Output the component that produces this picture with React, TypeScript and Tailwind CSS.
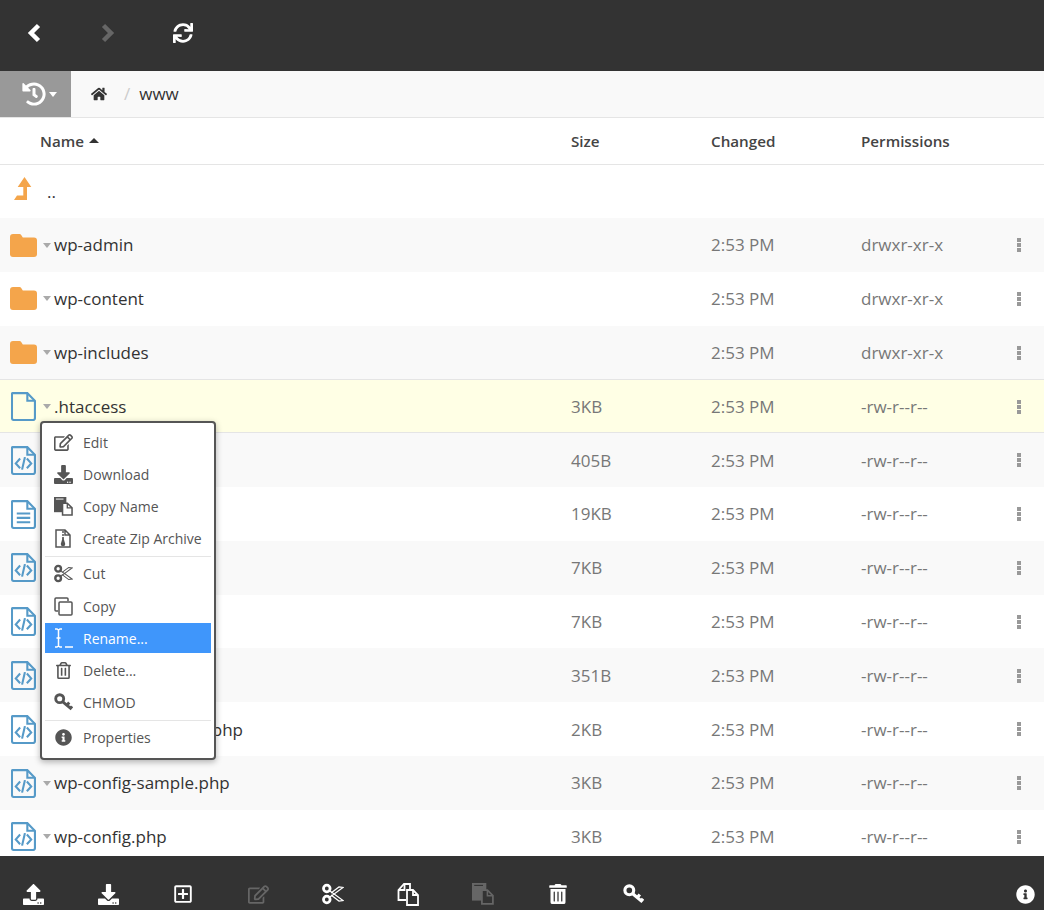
import {
  FaDownload,
  FaHistory,
  FaHome,
  FaInfoCircle,
  FaRegEdit,
  FaRegPlusSquare,
  FaRegTrashAlt,
  FaSync,
  FaTrashAlt,
  FaUpload,
} from "react-icons/fa";

type FileKind = "folder" | "file" | "code" | "text";

// names of rows fully covered by the open menu are left empty
const rows: { name: string; size: string; perms: string; kind: FileKind }[] = [
  { name: "wp-admin", size: "", perms: "drwxr-xr-x", kind: "folder" },
  { name: "wp-content", size: "", perms: "drwxr-xr-x", kind: "folder" },
  { name: "wp-includes", size: "", perms: "drwxr-xr-x", kind: "folder" },
  { name: ".htaccess", size: "3KB", perms: "-rw-r--r--", kind: "file" },
  { name: "", size: "405B", perms: "-rw-r--r--", kind: "code" },
  { name: "", size: "19KB", perms: "-rw-r--r--", kind: "text" },
  { name: "", size: "7KB", perms: "-rw-r--r--", kind: "code" },
  { name: "", size: "7KB", perms: "-rw-r--r--", kind: "code" },
  { name: "", size: "351B", perms: "-rw-r--r--", kind: "code" },
  { name: "wp-comments-post.php", size: "2KB", perms: "-rw-r--r--", kind: "code" },
  { name: "wp-config-sample.php", size: "3KB", perms: "-rw-r--r--", kind: "code" },
  { name: "wp-config.php", size: "3KB", perms: "-rw-r--r--", kind: "code" },
];

function FileIcon({ kind }: { kind: FileKind }) {
  if (kind === "folder") {
    return (
      <svg width="27" height="23" viewBox="0 0 27 23" fill="#f4a54b">
        <path d="M3 0h6.500a2 2 0 0 1 1.700 1l1.600 2.500H24a3 3 0 0 1 3 3V20a3 3 0 0 1-3 3H3a3 3 0 0 1-3-3V3a3 3 0 0 1 3-3z" />
      </svg>
    );
  }
  return (
    <svg width="25" height="29" viewBox="0 0 26 30" fill="none" stroke="#569ac8" strokeWidth="2.200">
      <path d="M2 1.100h15l7.900 8V27a2 2 0 0 1-2 2H3a2 2 0 0 1-2-2V2a1 1 0 0 1 1-1z" />
      <path d="M17 1v8h8" />
      {kind === "code" && <path d="M9.500 13l-4.500 5 4.500 5M16.500 13l4.500 5-4.500 5M14.500 11.500l-3 13" />}
      {kind === "text" && <path d="M6 14h14M6 18.500h14M6 23h14" />}
    </svg>
  );
}

function Caret({ color = "border-t-[#aaaaaa]" }: { color?: string }) {
  return <span className={`inline-block h-0 w-0 border-x-[4.500px] border-t-[5px] border-x-transparent ${color}`} />;
}

function Scissors({ size = 22 }: { size?: number }) {
  return (
    <svg width={size} height={size} viewBox="0 0 22 22" fill="none" stroke="currentColor">
      <circle cx="4.800" cy="5.500" r="3.300" strokeWidth="2.800" />
      <circle cx="4.800" cy="16.500" r="3.300" strokeWidth="2.800" />
      <path d="M8 8l13 9.500-4 .5-8-6M8 14L21 4.500l-4-.5-8 6" strokeWidth="1.200" />
    </svg>
  );
}

function KeyIcon({ size = 20 }: { size?: number }) {
  return (
    <svg width={size} height={size} viewBox="0 0 20 20" fill="none" stroke="currentColor" strokeWidth="3">
      <circle cx="6" cy="6" r="4.200" />
      <path d="M9 9l9.500 8M13.500 13l2.500-3M17 16.500l2-2.500" />
    </svg>
  );
}

function Chevron({ dir }: { dir: "left" | "right" }) {
  return (
    <svg width="14" height="20" viewBox="0 0 14 20" fill="none" stroke="currentColor" strokeWidth="4.500">
      <path d={dir === "left" ? "M11.500 2.500L4 10l7.500 7.500" : "M2.500 2.500L10 10l-7.500 7.500"} />
    </svg>
  );
}

function DoubleFile() {
  return (
    <svg width="22" height="23" viewBox="0 0 22 23" fill="none" stroke="currentColor" strokeWidth="1.800">
      <path d="M9 17H1.500V7L7 1h6v6" />
      <path d="M7.500 1v6H1.500" />
      <path d="M10 7h6l5 5v10H10z" />
      <path d="M16 7v5h5" />
    </svg>
  );
}

function PasteFile({ size, fill }: { size: number; fill: string }) {
  return (
    <svg width={size} height={size} viewBox="0 0 20 20" stroke="currentColor" fill="currentColor">
      <rect x="0" y="0" width="13" height="16" stroke="none" />
      <path d="M2 2.200h8" stroke={fill} strokeWidth="1" />
      <path d="M9 6.500h5l5 5V19H9z" fill={fill} strokeWidth="1.600" />
      <path d="M14 6.500v5h5" fill="none" strokeWidth="1.400" />
    </svg>
  );
}

function MenuRow({ icon, label, active }: { icon: React.ReactNode; label: string; active?: boolean }) {
  return (
    <div className="py-[1.100px]">
      <div className={`flex h-[30px] items-center ${active ? "bg-[#3f96fb] text-white" : "text-[#555555]"}`}>
        <span className="flex w-[36px] justify-center">{icon}</span>
        <span className="ml-[2px] text-[14px]">{label}</span>
      </div>
    </div>
  );
}

function ContextMenu() {
  return (
    <div className="absolute left-[40px] top-[256px] w-[176px] rounded-[4px] border-2 border-[#555555] bg-white px-[3px] pb-[4px] pt-[3px] shadow-[0_2px_6px_rgba(0,0,0,0.3)]">
      <MenuRow icon={<FaRegEdit size={19} />} label="Edit" />
      <MenuRow icon={<FaDownload size={19} />} label="Download" />
      <MenuRow icon={<PasteFile size={19} fill="#ffffff" />} label="Copy Name" />
      <MenuRow
        icon={
          <svg width="16" height="19" viewBox="0 0 16 19" fill="none" stroke="#555555" strokeWidth="1.500">
            <path d="M1 1h9l5 5v12H1zM10 1v5h5" />
            <path d="M7 3h2M7 6h2M7 9h2" />
            <path d="M8 10l1.500 5a1.500 1.500 0 0 1-3 0z" fill="#555555" />
          </svg>
        }
        label="Create Zip Archive"
      />
      <div className="my-px h-px bg-[#e5e5e5]" />
      <MenuRow icon={<Scissors size={19} />} label="Cut" />
      <MenuRow
        icon={
          <svg width="19" height="19" viewBox="0 0 19 19" fill="none" stroke="currentColor" strokeWidth="1.500">
            <path d="M4 14H2a1 1 0 0 1-1-1V2a1 1 0 0 1 1-1h11a1 1 0 0 1 1 1v2" />
            <rect x="5" y="5" width="13" height="13" rx="1" />
          </svg>
        }
        label="Copy"
      />
      <MenuRow
        active
        icon={
          <svg width="20" height="20" viewBox="0 0 20 20" fill="none" stroke="currentColor" strokeWidth="1.500">
            <path d="M2 1h2l1.500 1L7 1h2M5.500 2v16M2 19h2l1.500-1L7 19h2M3.500 10h4M12 19h8" />
          </svg>
        }
        label="Rename..."
      />
      <MenuRow icon={<FaRegTrashAlt size={17} />} label="Delete..." />
      <MenuRow icon={<KeyIcon size={19} />} label="CHMOD" />
      <div className="my-px h-px bg-[#e5e5e5]" />
      <MenuRow icon={<FaInfoCircle size={17} />} label="Properties" />
    </div>
  );
}

export default function App() {
  return (
    <div className="flex h-screen flex-col overflow-hidden bg-white font-['Open_Sans',sans-serif] text-[17px] text-[#333333]">
      {/* Top toolbar */}
      <div className="flex h-[71px] shrink-0 items-center gap-[48px] bg-[#333333] pb-[5px] pl-[21px] text-white">
        <span className="flex w-[26px] justify-center"><Chevron dir="left" /></span>
        <span className="flex w-[26px] justify-center text-[#666666]"><Chevron dir="right" /></span>
        <span className="ml-px flex w-[26px] justify-center"><FaSync size={20} /></span>
      </div>

      {/* Breadcrumb */}
      <div className="flex h-[47px] shrink-0 items-center border-b border-[#e5e5e5] bg-[#f9f9f9]">
        <div className="flex h-[46px] w-[71px] items-center gap-[3px] bg-[#999999] pl-[22px] text-white">
          <FaHistory size={24} />
          <Caret color="border-t-white" />
        </div>
        <FaHome size={16} className="ml-[20px] text-[#333333]" />
        <span className="ml-[17px] text-[#cccccc]">/</span>
        <span className="ml-[9px]">www</span>
      </div>

      {/* Column headers */}
      <div className="flex h-[47px] shrink-0 items-center border-b border-[#e5e5e5] text-[15.200px] font-semibold text-[#444444]">
        <span className="flex w-[571px] items-center gap-[5px] pl-[40px]">
          Name
          <span className="inline-block h-0 w-0 border-x-[5px] border-b-[5px] border-x-transparent border-b-[#333333]" />
        </span>
        <span className="w-[140px]">Size</span>
        <span className="w-[150px]">Changed</span>
        <span>Permissions</span>
      </div>

      {/* File list */}
      <div className="relative min-h-0 flex-1 overflow-hidden">
        <div className="flex h-[53px] items-center">
          <span className="flex w-[32px] justify-end pb-[6px]">
            <svg width="18" height="23" viewBox="0 0 18 23" fill="#f4a54b">
              <path d="M10.500 0l6.800 10h-4.300v13H0l3-4.400h6.300V10H3.700z" />
            </svg>
          </span>
          <span className="ml-[15px]">..</span>
        </div>
        {rows.map((row, i) => (
          <div
            key={i}
            className={`flex h-[53.800px] items-center pt-[0.600px] ${
              row.name === ".htaccess"
                ? "border-y border-[#e5e5e5] bg-[#ffffe5]"
                : i % 2 === 0
                  ? "bg-[#f9f9f9]"
                  : "bg-white"
            }`}
          >
            <div className="flex w-[571px] items-center pl-[9px]">
              <span className="flex w-[28px] justify-center"><FileIcon kind={row.kind} /></span>
              <span className="ml-[6px] mr-[3px] flex"><Caret /></span>
              {row.name}
            </div>
            <span className="w-[140px] text-[#777777]">{row.size}</span>
            <span className="w-[150px] text-[#777777]">2:53 PM</span>
            <span className="w-[155.500px] text-[#777777]">{row.perms}</span>
            <span className="flex flex-col gap-[1px]">
              <span className="h-[4px] w-[4px] bg-[#999999]" />
              <span className="h-[4px] w-[4px] bg-[#999999]" />
              <span className="h-[4px] w-[4px] bg-[#999999]" />
            </span>
          </div>
        ))}
        <ContextMenu />
      </div>

      {/* Bottom toolbar */}
      <div className="flex h-[54px] shrink-0 items-center bg-[#333333] pl-[20px] pr-[9px] pt-[22px] text-white">
        <div className="flex items-center gap-[49px]">
          <span className="flex w-[26px] justify-center"><FaUpload size={21} /></span>
          <span className="flex w-[26px] justify-center"><FaDownload size={21} /></span>
          <span className="flex w-[26px] justify-center"><FaRegPlusSquare size={20} /></span>
          <span className="flex w-[26px] justify-center text-[#666666]"><FaRegEdit size={21} /></span>
          <span className="flex w-[26px] justify-center"><Scissors /></span>
          <span className="flex w-[26px] justify-center"><DoubleFile /></span>
          <span className="flex w-[26px] justify-center text-[#666666]"><PasteFile size={22} fill="#333333" /></span>
          <span className="flex w-[26px] justify-center"><FaTrashAlt size={20} /></span>
          <span className="flex w-[26px] justify-center"><KeyIcon size={21} /></span>
        </div>
        <span className="ml-auto"><FaInfoCircle size={19} /></span>
      </div>
    </div>
  );
}
